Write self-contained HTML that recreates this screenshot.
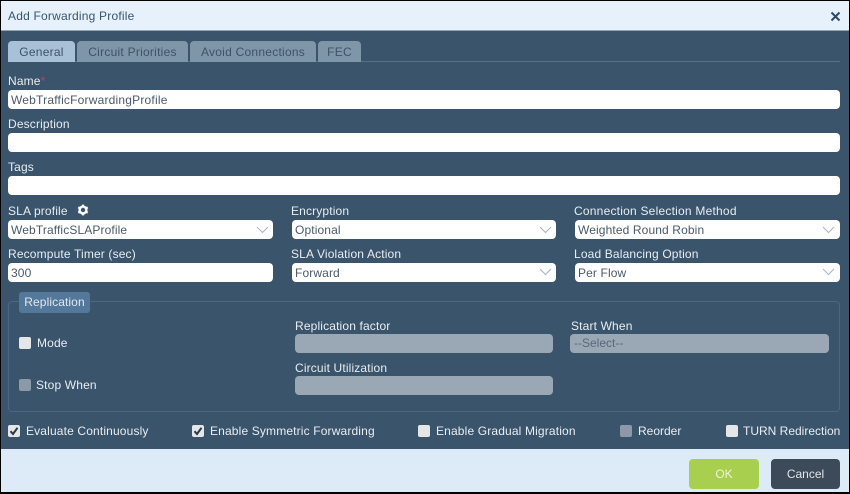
<!DOCTYPE html>
<html><head><meta charset="utf-8"><style>
html,body{margin:0;padding:0;background:#fff}
#p{position:relative;width:850px;height:494px;overflow:hidden;background:#000;font-family:"Liberation Sans",sans-serif;font-size:12px}
#p div,#p svg{position:absolute;box-sizing:border-box}
.hd{left:1px;top:1px;width:848px;height:29px;background:#e6f1fb}
.bd{left:1px;top:30px;width:848px;height:419px;background:#3a546c;border-top:1px solid #8ea6b8}
.ft{left:1px;top:449px;width:848px;height:43px;background:#dcebf7}
.t{white-space:nowrap;line-height:14px;color:#e8edf1;letter-spacing:.15px}
.tab{top:41px;height:21px;border-radius:4px 4px 0 0;background:#7f95a8;color:#3d5268;text-align:center;line-height:22px;letter-spacing:.25px}
.f{height:19px;background:#fff;border-radius:4px;color:#4a5a6a;line-height:20px;padding-left:3px;white-space:nowrap;letter-spacing:.12px}
.d{height:19px;background:#9aa8b5;border-radius:4px;color:#56697b;line-height:19px;padding-left:4px}
.cb{width:12px;height:12px;background:#e4e6e8;border-radius:2px}
.cg{width:12px;height:12px;background:#8b99a8;border-radius:2px}
</style></head><body><div id="p">
<div class="hd"></div><div class="bd"></div><div class="ft"></div>
<div class="t" style="left:8px;top:9px;color:#3a546c;letter-spacing:.2px">Add Forwarding Profile</div>
<svg style="left:830px;top:11px" width="11" height="11" viewBox="0 0 11 11"><path d="M1.5 1.5L9.5 9.5M9.5 1.5L1.5 9.5" stroke="#2f4a62" stroke-width="2" fill="none"/></svg>

<div style="left:8px;top:61px;width:832px;height:1px;background:#56708a"></div>
<div class="tab" style="left:8px;width:67px;background:#a9c1d6">General</div>
<div class="tab" style="left:77px;width:111px">Circuit Priorities</div>
<div class="tab" style="left:190px;width:126px">Avoid Connections</div>
<div class="tab" style="left:318px;width:43px">FEC</div>

<div class="t" style="left:8px;top:74px">Name<span style="color:#c0405a">*</span></div>
<div class="f" style="left:8px;top:90px;width:832px;letter-spacing:.2px">WebTrafficForwardingProfile</div>
<div class="t" style="left:8px;top:117px">Description</div>
<div class="f" style="left:8px;top:133px;width:832px"></div>
<div class="t" style="left:8px;top:160px">Tags</div>
<div class="f" style="left:8px;top:176px;width:832px"></div>

<div class="t" style="left:8px;top:204px">SLA profile</div>
<svg style="left:77px;top:204px" width="12" height="12" viewBox="0 0 12 12"><circle cx="6" cy="6" r="3.4" fill="none" stroke="#fff" stroke-width="2.4"/><path d="M6 .6V3M6 9V11.4M1.3 3.3L3.4 4.5M8.6 7.5L10.7 8.7M1.3 8.7L3.4 7.5M8.6 4.5L10.7 3.3" stroke="#fff" stroke-width="2.2"/></svg>
<div class="f" style="left:8px;top:220px;width:265px">WebTrafficSLAProfile</div>
<div class="t" style="left:8px;top:247px">Recompute Timer (sec)</div>
<div class="f" style="left:8px;top:263px;width:265px">300</div>

<div class="t" style="left:291px;top:204px">Encryption</div>
<div class="f" style="left:292px;top:220px;width:264px">Optional</div>
<div class="t" style="left:291px;top:247px">SLA Violation Action</div>
<div class="f" style="left:292px;top:263px;width:264px">Forward</div>

<div class="t" style="left:574px;top:204px;letter-spacing:.22px">Connection Selection Method</div>
<div class="f" style="left:575px;top:220px;width:265px">Weighted Round Robin</div>
<div class="t" style="left:574px;top:247px">Load Balancing Option</div>
<div class="f" style="left:575px;top:263px;width:265px">Per Flow</div>

<svg style="left:0;top:0" width="850" height="494" viewBox="0 0 850 494" fill="none" stroke="#aab4be" stroke-width="1"><path d="M257 227l5.500 5.500 5.500-5.500M540 227l5.500 5.500 5.500-5.500M823 227l5.500 5.500 5.500-5.500M540 269l5.500 5.500 5.500-5.500M823 269l5.500 5.500 5.500-5.500"/></svg>

<div style="left:8px;top:301px;width:832px;height:111px;border:1px solid #4a6880;border-radius:4px"></div>
<div style="left:19px;top:292px;width:71px;height:21px;background:#54789a;border-radius:3px;color:#dfe8ef;text-align:center;line-height:21px;letter-spacing:.1px">Replication</div>

<div class="cb" style="left:19px;top:337px"></div>
<div class="t" style="left:37px;top:336px">Mode</div>
<div class="cg" style="left:19px;top:379px"></div>
<div class="t" style="left:36px;top:378px">Stop When</div>

<div class="t" style="left:295px;top:319px">Replication factor</div>
<div class="d" style="left:295px;top:334px;width:258px"></div>
<div class="t" style="left:295px;top:361px">Circuit Utilization</div>
<div class="d" style="left:295px;top:376px;width:258px"></div>
<div class="t" style="left:571px;top:319px">Start When</div>
<div class="d" style="left:570px;top:334px;width:259px">--Select--</div>

<div class="cb" style="left:8px;top:425px"></div>
<svg style="left:8px;top:425px" width="12" height="12" viewBox="0 0 12 12"><path d="M2.5 6.2L5 9 9.5 2.800" stroke="#2b3a48" stroke-width="2" fill="none"/></svg>
<div class="t" style="left:26px;top:424px">Evaluate Continuously</div>
<div class="cb" style="left:192px;top:425px"></div>
<svg style="left:192px;top:425px" width="12" height="12" viewBox="0 0 12 12"><path d="M2.5 6.2L5 9 9.5 2.800" stroke="#2b3a48" stroke-width="2" fill="none"/></svg>
<div class="t" style="left:210px;top:424px">Enable Symmetric Forwarding</div>
<div class="cb" style="left:418px;top:425px"></div>
<div class="t" style="left:436px;top:424px">Enable Gradual Migration</div>
<div class="cg" style="left:620px;top:425px"></div>
<div class="t" style="left:638px;top:424px;letter-spacing:0">Reorder</div>
<div class="cb" style="left:726px;top:425px"></div>
<div class="t" style="left:743px;top:424px;letter-spacing:0">TURN Redirection</div>

<div style="left:689px;top:459px;width:70px;height:30px;background:#a8cf4e;border-radius:4px;color:#eef5d8;text-align:center;line-height:30px">OK</div>
<div style="left:771px;top:459px;width:69px;height:30px;background:#3d4a5a;border-radius:4px;color:#dfe5ea;text-align:center;line-height:30px">Cancel</div>
</div></body></html>
